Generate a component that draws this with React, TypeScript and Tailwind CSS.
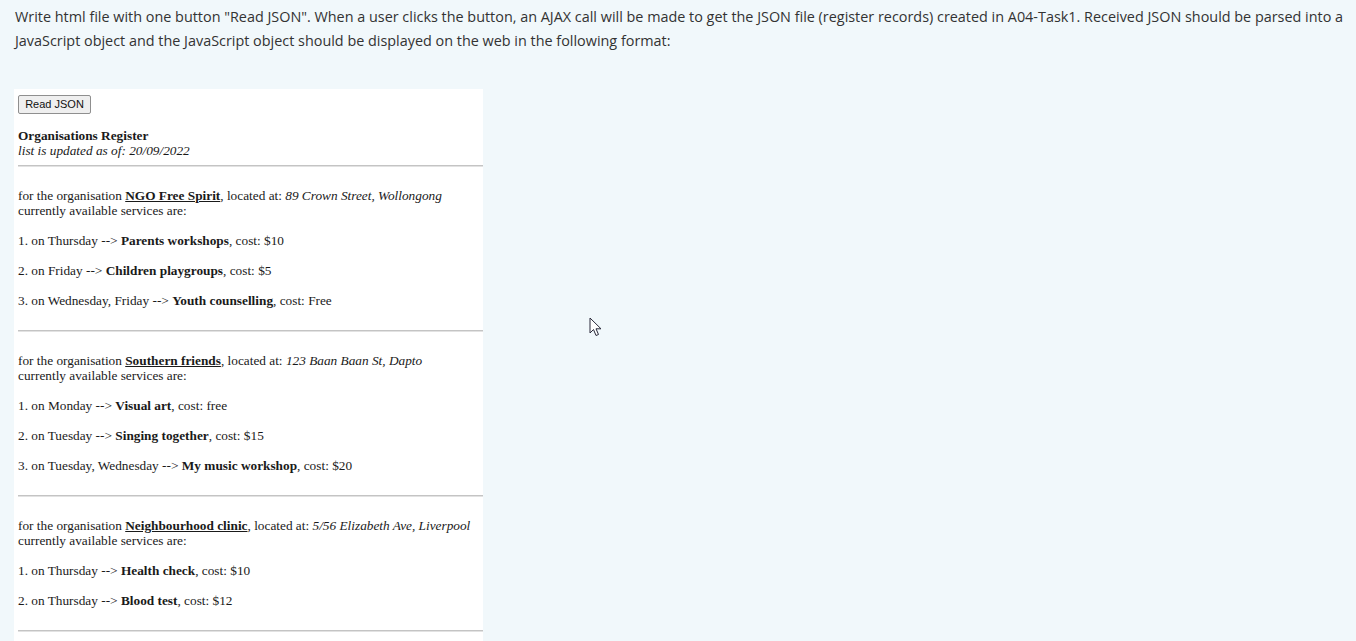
type Service = { days: string; name: string; cost: string };
type Org = { name: string; address: string; services: Service[] };

const register: Org[] = [
  {
    name: "NGO Free Spirit",
    address: "89 Crown Street, Wollongong",
    services: [
      { days: "Thursday", name: "Parents workshops", cost: "$10" },
      { days: "Friday", name: "Children playgroups", cost: "$5" },
      { days: "Wednesday, Friday", name: "Youth counselling", cost: "Free" },
    ],
  },
  {
    name: "Southern friends",
    address: "123 Baan Baan St, Dapto",
    services: [
      { days: "Monday", name: "Visual art", cost: "free" },
      { days: "Tuesday", name: "Singing together", cost: "$15" },
      { days: "Tuesday, Wednesday", name: "My music workshop", cost: "$20" },
    ],
  },
  {
    name: "Neighbourhood clinic",
    address: "5/56 Elizabeth Ave, Liverpool",
    services: [
      { days: "Thursday", name: "Health check", cost: "$10" },
      { days: "Thursday", name: "Blood test", cost: "$12" },
    ],
  },
];

function Rule() {
  return <div className="h-[2px] bg-[#c4c4c4] border-b border-[#e2e2e2]" />;
}

function OrgBlock({ org }: { org: Org }) {
  return (
    <div className="pt-[21px] pb-[22px]">
      <div className="leading-[15px]">
        for the organisation <b className="underline underline-offset-1">{org.name}</b>, located at:{" "}
        <i>{org.address}</i>
      </div>
      <div className="leading-[15px]">currently available services are:</div>
      <div className="mt-[15px] flex flex-col gap-[15px]">
        {org.services.map((s, i) => (
          <div key={i} className="leading-[15px]">
            {i + 1}. on {s.days} --&gt; <b>{s.name}</b>, cost: {s.cost}
          </div>
        ))}
      </div>
    </div>
  );
}

function Cursor() {
  return (
    <svg
      className="absolute left-[589px] top-[317px]"
      width="14"
      height="22"
      viewBox="0 0 14 22"
    >
      <path
        d="M1 1 L1 16 L4.5 12.5 L7 18.5 L9.5 17.5 L7 11.8 L12 11.8 Z"
        fill="#fff"
        stroke="#2a2a3a"
        strokeWidth="1"
        strokeLinejoin="round"
      />
    </svg>
  );
}

export default function App() {
  return (
    <div className="relative min-h-[641px] bg-[#f1f8fb] overflow-hidden">
      <p
        className="pl-[15px] pr-[6px] pt-[5px] text-[14.4px] leading-[24px] text-[#333]"
        style={{ fontFamily: '"Open Sans", "Noto Sans", sans-serif' }}
      >
        Write html file with one button "Read JSON". When a user clicks the button, an AJAX call will be made to
        get the JSON file (register records) created in A04-Task1. Received JSON should be parsed into a
        JavaScript object and the JavaScript object should be displayed on the web in the following format:
      </p>

      <div className="ml-[14px] mt-[36px] w-[469px] bg-white pl-[4px] pt-[5px] text-[13.3px] text-[#1a1a1a] font-['Liberation_Serif',serif]">
        <button className="h-[19px] w-[73px] rounded-[2px] border border-[#8f8f8f] bg-[#efefef] text-[11px] leading-[17px] text-[#111] font-['Liberation_Sans',Arial,sans-serif]">
          Read JSON
        </button>

        <div className="mt-[14px] pb-[7px]">
          <div className="font-bold leading-[15px]">Organisations Register</div>
          <div className="italic leading-[15px]">list is updated as of: 20/09/2022</div>
        </div>
        <Rule />

        {register.map((org) => (
          <div key={org.name}>
            <OrgBlock org={org} />
            <Rule />
          </div>
        ))}
        <div className="h-[20px]" />
      </div>

      <Cursor />
    </div>
  );
}
